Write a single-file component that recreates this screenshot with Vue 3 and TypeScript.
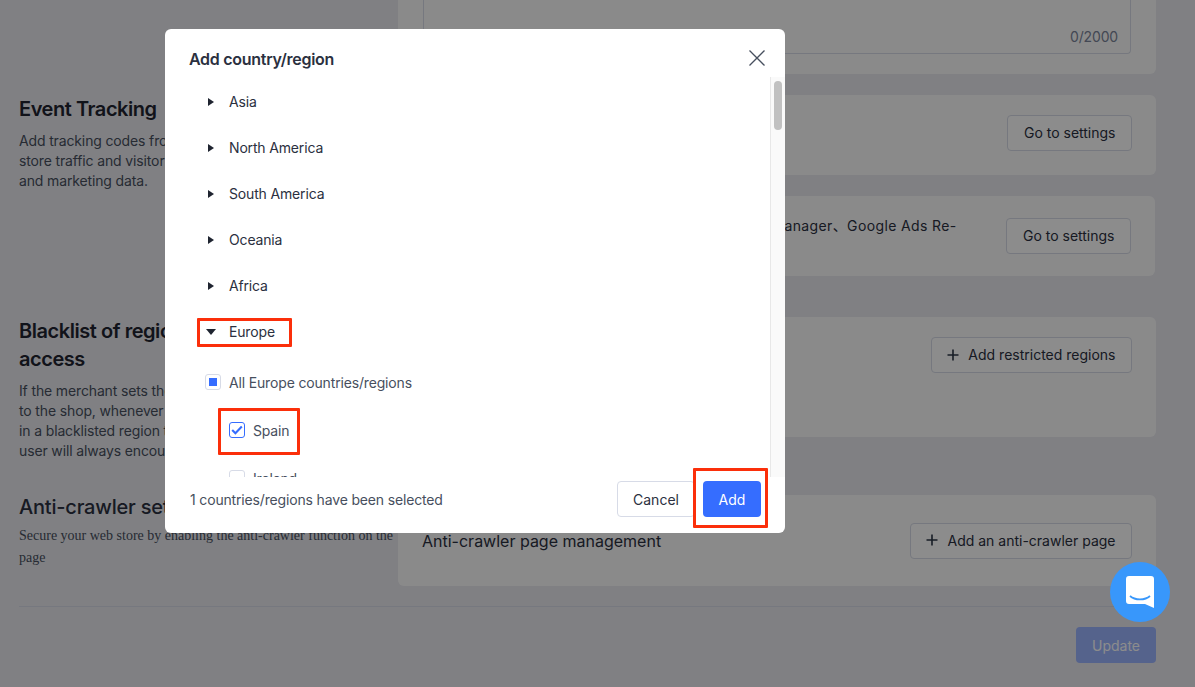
<template>
  <div class="page">
    <div class="rows">
      <div class="row row-top">
        <div class="side"></div>
        <div class="cards">
          <div class="card card-text">
            <div class="textarea"><span class="count">0/2000</span></div>
          </div>
        </div>
      </div>

      <div class="row row-tracking">
        <div class="side">
          <h2 class="side-title">Event Tracking</h2>
          <p class="side-desc">Add tracking codes from third-party platforms to analyze<br />store traffic and visitor behavior, and collect analytics<br />and marketing data.</p>
        </div>
        <div class="cards">
          <div class="card card-setting">
            <span class="setting-text">Data analytics tools</span>
            <button class="btn">Go to settings</button>
          </div>
          <div class="card card-setting card-setting-b">
            <span class="setting-text setting-long">Facebook Pixel、Google Analytics 4、Google Tag Manager、Google Ads Re-<br />marketing</span>
            <button class="btn">Go to settings</button>
          </div>
        </div>
      </div>

      <div class="row row-blacklist">
        <div class="side side-blacklist">
          <h2 class="side-title">Blacklist of regions with restricted access</h2>
          <p class="side-desc">If the merchant sets the regions that have no access<br />to the shop, whenever a user attempts to visit from<br />in a blacklisted region the page will be blocked and the<br />user will always encounter the restricted notice.</p>
        </div>
        <div class="cards">
          <div class="card card-black">
            <button class="btn btn-icon">
              <svg width="12" height="12" viewBox="0 0 12 12"><path d="M6 .5v11M.5 6h11" stroke="#2b3545" stroke-width="1.6" fill="none" /></svg>
              Add restricted regions
            </button>
          </div>
        </div>
      </div>

      <div class="row row-crawler">
        <div class="side side-crawler">
          <h2 class="side-title side-title-light">Anti-crawler settings</h2>
          <p class="side-serif">Secure your web store by enabling the anti-crawler function on the page</p>
        </div>
        <div class="cards">
          <div class="card card-crawler">
            <span class="crawler-text">Anti-crawler page management</span>
            <button class="btn btn-icon">
              <svg width="12" height="12" viewBox="0 0 12 12"><path d="M6 .5v11M.5 6h11" stroke="#2b3545" stroke-width="1.6" fill="none" /></svg>
              Add an anti-crawler page
            </button>
          </div>
        </div>
      </div>
    </div>

    <div class="page-foot">
      <button class="btn-update">Update</button>
    </div>

    <div class="overlay">
      <div class="modal">
        <div class="modal-head">
          <span class="modal-title">Add country/region</span>
          <svg class="close" width="18" height="18" viewBox="0 0 18 18"><path d="M1.5 1.5l15 15M16.5 1.5l-15 15" stroke="#474f5e" stroke-width="1.3" fill="none" /></svg>
        </div>

        <div class="modal-body">
          <div class="tree">
            <div v-for="name in regions" :key="name" class="tree-row">
              <span class="caret"></span>
              <span class="tree-label">{{ name }}</span>
            </div>
            <div class="tree-row">
              <span class="caret caret-open"></span>
              <span class="tree-label">Europe</span>
            </div>
            <div class="check-row check-all">
              <span class="box"><span class="box-dot"></span></span>
              <span class="check-label">All Europe countries/regions</span>
            </div>
            <div class="check-row check-sub">
              <span class="box box-on">
                <svg width="12" height="10" viewBox="0 0 12 10"><path d="M1.2 5l3.2 3.2L10.8 1.6" stroke="#356dff" stroke-width="2.1" fill="none" /></svg>
              </span>
              <span class="check-label">Spain</span>
            </div>
            <div class="check-row check-sub">
              <span class="box"></span>
              <span class="check-label">Ireland</span>
            </div>
          </div>
          <div class="track"><div class="thumb"></div></div>
        </div>

        <div class="modal-foot">
          <span class="selected">1 countries/regions have been selected</span>
          <div class="foot-btns">
            <button class="btn-cancel">Cancel</button>
            <button class="btn-add">Add</button>
          </div>
        </div>

        <!-- annotation frames -->
        <div class="mark mark-europe"></div>
        <div class="mark mark-spain"></div>
        <div class="mark mark-add"></div>
      </div>
    </div>

    <div class="chat">
      <svg width="30" height="34" viewBox="0 0 30 34">
        <path d="M4 1h22a3 3 0 0 1 3 3v29l-9-4H4a3 3 0 0 1-3-3V4a3 3 0 0 1 3-3z" fill="#fff" />
        <path d="M5 21c5 4.5 15 4.5 20 0" stroke="#3897fb" stroke-width="1.8" fill="none" />
      </svg>
    </div>
  </div>
</template>

<script setup lang="ts">
const regions: string[] = ['Asia', 'North America', 'South America', 'Oceania', 'Africa']
</script>

<style>
html,
body {
  margin: 0;
  overflow: hidden;
}
</style>

<style scoped>
.page {
  position: relative;
  width: 1195px;
  height: 687px;
  overflow: hidden;
  background: #e9eaef;
  font-family: Inter, 'Noto Sans CJK SC', sans-serif;
  color: #2b3040;
}

.rows {
  display: flex;
  flex-direction: column;
  padding: 0 39px 0 19px;
}

.row {
  display: grid;
  grid-template-columns: 379px 1fr;
}

.row-tracking {
  margin-top: 21px;
}

.row-blacklist {
  margin-top: 41px;
}

.row-crawler {
  margin-top: 58px;
}

.side-blacklist {
  margin-bottom: -24px;
}

.side-title {
  margin: 0 0 8px;
  font-size: 20px;
  line-height: 28px;
  font-weight: 600;
  letter-spacing: -0.45px;
  color: #1f2430;
}

.side-title-light {
  font-weight: 500;
  letter-spacing: -0.2px;
  color: #2b3040;
  margin-bottom: 4px;
}

.side-crawler {
  margin-top: -2px;
}

.side-desc {
  margin: 0;
  font-size: 14px;
  line-height: 20px;
  letter-spacing: -0.14px;
  white-space: nowrap;
  color: #474f5e;
}

.side-serif {
  margin: 0;
  font-family: 'Liberation Serif', serif;
  font-size: 14px;
  line-height: 22px;
  color: #474f5e;
}

.cards {
  display: flex;
  flex-direction: column;
  gap: 21px;
}

.card {
  background: #fcfcfc;
  border-radius: 6px;
}

.card-text {
  height: 74px;
  padding: 0 25px;
  box-sizing: border-box;
  border-radius: 0 0 6px 6px;
}

.textarea {
  height: 54px;
  box-sizing: border-box;
  border: 1px solid #d7dbe7;
  border-top: 0;
  border-radius: 0 0 4px 4px;
  display: flex;
  align-items: flex-end;
  justify-content: flex-end;
  padding: 0 12px 6px 0;
}

.count {
  font-size: 14px;
  line-height: 20px;
  letter-spacing: -0.16px;
  color: #7a8499;
}

.card-setting {
  height: 80px;
  box-sizing: border-box;
  padding: 20px 24px 0;
  display: flex;
  justify-content: space-between;
  align-items: flex-start;
}

.card-setting-b {
  margin-right: 1px;
  padding-top: 22px;
}

.setting-text {
  font-size: 14px;
  line-height: 20px;
  padding-top: 8px;
}

.setting-long {
  white-space: nowrap;
  padding-top: 0;
  margin-top: -2px;
  letter-spacing: 0.37px;
}

.btn {
  height: 36px;
  box-sizing: border-box;
  padding: 0 15.5px 1px;
  border: 1px solid #d7dbe7;
  border-radius: 4px;
  background: #fff;
  font: 400 14px Inter, sans-serif;
  color: #2b3040;
  white-space: nowrap;
  flex: none;
}

.btn-icon {
  display: flex;
  align-items: center;
  gap: 9px;
}

.card-black {
  height: 120px;
  box-sizing: border-box;
  padding: 20px 24px;
  display: flex;
  justify-content: flex-end;
  align-items: flex-start;
}

.card-crawler {
  height: 91px;
  box-sizing: border-box;
  padding: 28px 24px;
  display: flex;
  justify-content: space-between;
  align-items: center;
}

.crawler-text {
  font-size: 16px;
  font-weight: 400;
}

.page-foot {
  margin: 20px 39px 0 19px;
  padding-top: 20px;
  border-top: 1px solid #d7dbe7;
  display: flex;
  justify-content: flex-end;
}

.btn-update {
  width: 80px;
  height: 36px;
  border: 0;
  border-radius: 4px;
  background: #9bb4ff;
  font: 400 14px Inter, sans-serif;
  color: #fff;
}

.overlay {
  position: absolute;
  inset: 0;
  background: rgba(0, 0, 0, 0.45);
}

.modal {
  position: absolute;
  left: 165px;
  top: 29px;
  width: 620px;
  height: 504px;
  display: flex;
  flex-direction: column;
  background: #fff;
  border-radius: 6px;
  overflow: hidden;
}

.modal-head {
  height: 48px;
  flex: none;
  display: flex;
  align-items: center;
  justify-content: space-between;
  padding: 10px 19px 0 24px;
  box-sizing: border-box;
}

.modal-title {
  font-size: 16px;
  font-weight: 600;
  letter-spacing: -0.28px;
  margin-top: 1px;
  color: #2b3040;
}

.modal-body {
  flex: 1;
  min-height: 0;
  display: flex;
}

.tree {
  flex: 1;
  overflow: hidden;
  padding-top: 2px;
  letter-spacing: -0.16px;
}

.tree-row {
  height: 46px;
  display: flex;
  align-items: center;
  padding-left: 43px;
  font-size: 14px;
  color: #2b3040;
}

.caret {
  width: 0;
  height: 0;
  border-left: 6px solid #1f2430;
  border-top: 4px solid transparent;
  border-bottom: 4px solid transparent;
  margin-right: 15px;
}

.caret-open {
  border-left: 5px solid transparent;
  border-right: 5px solid transparent;
  border-top: 6px solid #1f2430;
  border-bottom: 0;
  margin-left: -2px;
  margin-right: 13px;
}

.tree-label {
  line-height: 20px;
}

.check-row {
  display: flex;
  align-items: center;
  gap: 8px;
  height: 48px;
  font-size: 14px;
  color: #474f5e;
}

.check-all {
  padding-left: 40px;
  margin-top: 3px;
}

.check-sub {
  padding-left: 64px;
}

.box {
  width: 16px;
  height: 16px;
  flex: none;
  box-sizing: border-box;
  border: 1px solid #d7dbe7;
  border-radius: 3px;
  background: #fff;
  display: flex;
  align-items: center;
  justify-content: center;
}

.box-dot {
  width: 8px;
  height: 8px;
  background: #356dff;
}

.box-on {
  border-color: #356dff;
}

.track {
  width: 15px;
  flex: none;
  box-sizing: border-box;
  background: #fafafa;
  border-left: 1px solid #e8e8e8;
  padding: 4px 3px 0 3px;
}

.thumb {
  width: 8px;
  height: 49px;
  border-radius: 4px;
  background: #c1c1c1;
}

.modal-foot {
  height: 56px;
  flex: none;
  box-sizing: border-box;
  padding: 4px 24px 16px 25px;
  display: flex;
  align-items: center;
  justify-content: space-between;
}

.selected {
  font-size: 14px;
  letter-spacing: -0.16px;
  color: #474f5e;
}

.foot-btns {
  display: flex;
  gap: 8px;
}

.btn-cancel,
.btn-add {
  height: 36px;
  border-radius: 4px;
  font: 400 14px Inter, sans-serif;
  box-sizing: border-box;
}

.btn-cancel {
  width: 78px;
  background: #fff;
  border: 1px solid #d7dbe7;
  color: #2b3040;
}

.btn-add {
  width: 58px;
  background: #356dff;
  border: 0;
  color: #fff;
}

.mark {
  position: absolute;
  box-sizing: border-box;
  border: 3px solid #fb2f0a;
  border-radius: 1px;
}

.mark-europe {
  left: 32px;
  top: 289px;
  width: 95px;
  height: 29px;
}

.mark-spain {
  left: 53px;
  top: 379px;
  width: 82px;
  height: 47px;
}

.mark-add {
  left: 528px;
  top: 439px;
  width: 75px;
  height: 60px;
}

.chat {
  position: absolute;
  left: 1110px;
  top: 562px;
  width: 60px;
  height: 60px;
  border-radius: 50%;
  background: #3897fb;
  display: flex;
  align-items: center;
  justify-content: center;
}
</style>
